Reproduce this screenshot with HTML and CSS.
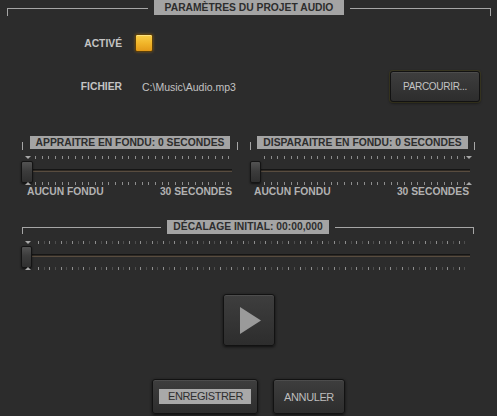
FILE: index.html
```html
<!DOCTYPE html>
<html lang="fr">
<head>
    <meta charset="UTF-8">
    <title>Paramètres du projet audio</title>
    <link rel="stylesheet" href="styles.css">
</head>
<body>
    <div class="panel">
        <!-- Paramètres généraux -->
        <div class="head top">
            <span class="line l"></span>
            <span class="title">PARAMÈTRES DU PROJET AUDIO</span>
            <span class="line r"></span>
        </div>

        <div class="row first">
            <span class="lbl">ACTIVÉ</span>
            <span class="check"></span>
        </div>
        <div class="row">
            <span class="lbl">FICHIER</span>
            <span class="path">C:\Music\Audio.mp3</span>
            <button class="btn browse">PARCOURIR...</button>
        </div>

        <!-- Fondus -->
        <div class="fades">
            <div class="group fade-in">
                <div class="head fade">
                    <span class="line l"></span>
                    <span class="title">APPRAITRE EN FONDU: 0 SECONDES</span>
                    <span class="line r"></span>
                </div>
                <div class="slider">
                    <div class="ticks"></div>
                    <div class="track"></div>
                    <div class="ticks"></div>
                    <span class="thumb"></span>
                    <span class="mark down"></span>
                    <span class="mark up"></span>
                </div>
                <div class="range-labels">
                    <span>AUCUN FONDU</span>
                    <span>30 SECONDES</span>
                </div>
            </div>
            <div class="group fade-out">
                <div class="head fade">
                    <span class="line l"></span>
                    <span class="title">DISPARAITRE EN FONDU: 0 SECONDES</span>
                    <span class="line r"></span>
                </div>
                <div class="slider end">
                    <div class="ticks"></div>
                    <div class="track"></div>
                    <div class="ticks"></div>
                    <span class="thumb"></span>
                    <span class="mark down"></span>
                    <span class="mark up"></span>
                </div>
                <div class="range-labels">
                    <span>AUCUN FONDU</span>
                    <span>30 SECONDES</span>
                </div>
            </div>
        </div>

        <!-- Décalage -->
        <div class="group offset">
            <div class="head mid">
                <span class="line l"></span>
                <span class="title">DÉCALAGE INITIAL: 00:00,000</span>
                <span class="line r"></span>
            </div>
            <div class="slider wide">
                <div class="ticks"></div>
                <div class="track"></div>
                <div class="ticks"></div>
                <span class="thumb"></span>
                <span class="mark down"></span>
                <span class="mark up"></span>
            </div>
        </div>

        <div class="play-row">
            <button class="btn play">
                <svg width="21" height="27" viewBox="0 0 21 27"><polygon points="0,0 21,13.5 0,27" fill="#9a9a9a"/></svg>
            </button>
        </div>

        <div class="actions">
            <button class="btn save"><span class="focus">ENREGISTRER</span></button>
            <button class="btn cancel">ANNULER</button>
        </div>
    </div>
</body>
</html>
```

FILE: styles.css
```css
* {
    box-sizing: border-box;
    margin: 0;
    padding: 0;
}

body {
    background: #2c2c2c;
    font-family: 'Liberation Sans', Arial, sans-serif;
    color: #c2c2c2;
    width: 497px;
    height: 416px;
    overflow: hidden;
}

.panel {
    padding-top: 0;
}

/* Titres de groupe */
.head {
    display: flex;
    align-items: flex-start;
    gap: 6px;
}

.head .line {
    flex: 1;
    min-width: 1px;
    border-top: 1px solid #a6a6a6;
}

.head .line.l {
    border-left: 1px solid #a6a6a6;
}

.head .line.r {
    border-right: 1px solid #a6a6a6;
}

.head .title {
    background: #a4a4a4;
    color: #2d2d2d;
    font-weight: bold;
    font-size: 10.3px;
    white-space: nowrap;
}

.head.top {
    height: 16px;
    padding: 0 6px 0 7px;
}

.head.top .line {
    height: 8px;
    margin-top: 8px;
}

.head.top .title {
    line-height: 15px;
    padding: 0 11px;
}

.head.fade {
    height: 14px;
}

.head.fade .line {
    border-top: 0;
    height: 8px;
    margin-top: 6px;
}

.head.fade .title {
    line-height: 13px;
    padding: 0 6px;
}

.head.mid {
    height: 14px;
}

.head.mid .line {
    height: 7px;
    margin-top: 7px;
}

.head.mid .title {
    line-height: 14px;
    padding: 0 6px;
}

/* Lignes du formulaire */
.row {
    display: flex;
    align-items: center;
    margin-top: 19px;
}

.row.first {
    margin-top: 18px;
}

.lbl {
    width: 122px;
    text-align: right;
    font-weight: bold;
    font-size: 10.3px;
    color: #c4c4c4;
}

.check {
    width: 18px;
    height: 18px;
    margin-left: 13px;
    border: 1px solid #5c3f0a;
    border-radius: 2px;
    background: linear-gradient(#f9cf48, #f0b328 55%, #e39a18);
    box-shadow: inset 0 1px 0 rgba(255, 240, 170, 0.6), 0 0 3px rgba(230, 150, 20, 0.45);
}

.path {
    margin-left: 20px;
    font-size: 10.5px;
    color: #c3c3c3;
}

/* Boutons */
.btn {
    border: 1px solid #121212;
    border-radius: 3px;
    background: linear-gradient(#3e3e3e, #2d2d2d);
    box-shadow: inset 0 1px 0 rgba(255, 255, 255, 0.08), 0 1px 3px rgba(0, 0, 0, 0.7);
    color: #c4c4c4;
    font-family: inherit;
    font-size: 10px;
    letter-spacing: -0.3px;
    cursor: pointer;
}

.browse {
    width: 90px;
    height: 31px;
    margin-left: auto;
    margin-right: 17px;
    box-shadow: inset 0 1px 0 rgba(255, 255, 255, 0.08), 0 0 0 1px rgba(70, 65, 30, 0.55), 0 1px 3px rgba(0, 0, 0, 0.7);
}

/* Fondus */
.fades {
    display: flex;
    gap: 12px;
    padding: 0 22px;
    margin-top: 34px;
}

.fade-in {
    width: 216px;
}

.fade-out {
    width: 225px;
}

.slider {
    position: relative;
    height: 29px;
    margin-top: 6px;
    display: grid;
    grid-template-rows: 3px 1fr 3px;
}

.ticks {
    margin: 0 6px 0 13px;
    background: repeating-linear-gradient(to right, #8e8e8e 0 1px, transparent 1px 6.67px);
}

.track {
    margin: 0 6px 0 11px;
    background: linear-gradient(to bottom, transparent 10px, #151515 10px 11px, #2e2923 11px 12px, #584c3f 12px 13px, transparent 13px);
}

.thumb {
    position: absolute;
    left: -1px;
    top: 5px;
    width: 12px;
    height: 22px;
    border: 1px solid #141414;
    border-radius: 2px;
    background: linear-gradient(#535353, #3c3c3c 45%, #2f2f2f);
    box-shadow: 0 1px 2px rgba(0, 0, 0, 0.6);
}

.mark {
    position: absolute;
    left: 3px;
    width: 0;
    height: 0;
    border-left: 3px solid transparent;
    border-right: 3px solid transparent;
}

.mark.down {
    top: 0;
    border-top: 3px solid #a8a8a8;
}

.mark.up {
    bottom: 0;
    border-bottom: 3px solid #a8a8a8;
}

.slider.end .ticks {
    margin: 0 10px 0 14px;
}

.slider.end .track {
    margin: 0 5px 0 10px;
}

.slider.end .thumb {
    left: 0;
    width: 11px;
}

.slider.end .mark {
    left: 216px;
}

.range-labels {
    display: flex;
    justify-content: space-between;
    margin-top: 1px;
    padding: 0 6px 0 5px;
    font-weight: bold;
    font-size: 10.3px;
    line-height: 12px;
    color: #b2b2b2;
}

.fade-out .range-labels {
    padding: 0 6px 0 4px;
}

/* Décalage */
.offset {
    margin: 22px 23px 0 22px;
}

.slider.wide {
    margin-top: 7px;
}

.slider.wide .ticks {
    margin: 0 4px 0 16px;
    background:
        repeating-linear-gradient(to right, #8e8e8e 0 1px, transparent 1px 11.37px),
        repeating-linear-gradient(to right, transparent 0 5.7px, #4e4e4e 5.7px 6.7px, transparent 6.7px 11.37px);
}

.slider.wide .track {
    margin: 0 4px 0 10px;
}

.slider.wide .thumb {
    width: 11px;
}

/* Lecture */
.play-row {
    display: flex;
    justify-content: center;
    margin-top: 24px;
}

.play {
    width: 52px;
    height: 52px;
    display: flex;
    align-items: center;
    justify-content: center;
    padding-left: 3px;
}

/* Actions */
.actions {
    display: flex;
    justify-content: center;
    gap: 15px;
    margin-top: 33px;
}

.actions .btn {
    height: 35px;
    font-size: 11px;
    letter-spacing: -0.4px;
}

.save {
    width: 106px;
}

.cancel {
    width: 72px;
    color: #bdbdbd;
}

.focus {
    display: inline-block;
    background: #a9a9a9;
    color: #2e2e2e;
    line-height: 15px;
    padding: 0 8px 0 9px;
}
```
